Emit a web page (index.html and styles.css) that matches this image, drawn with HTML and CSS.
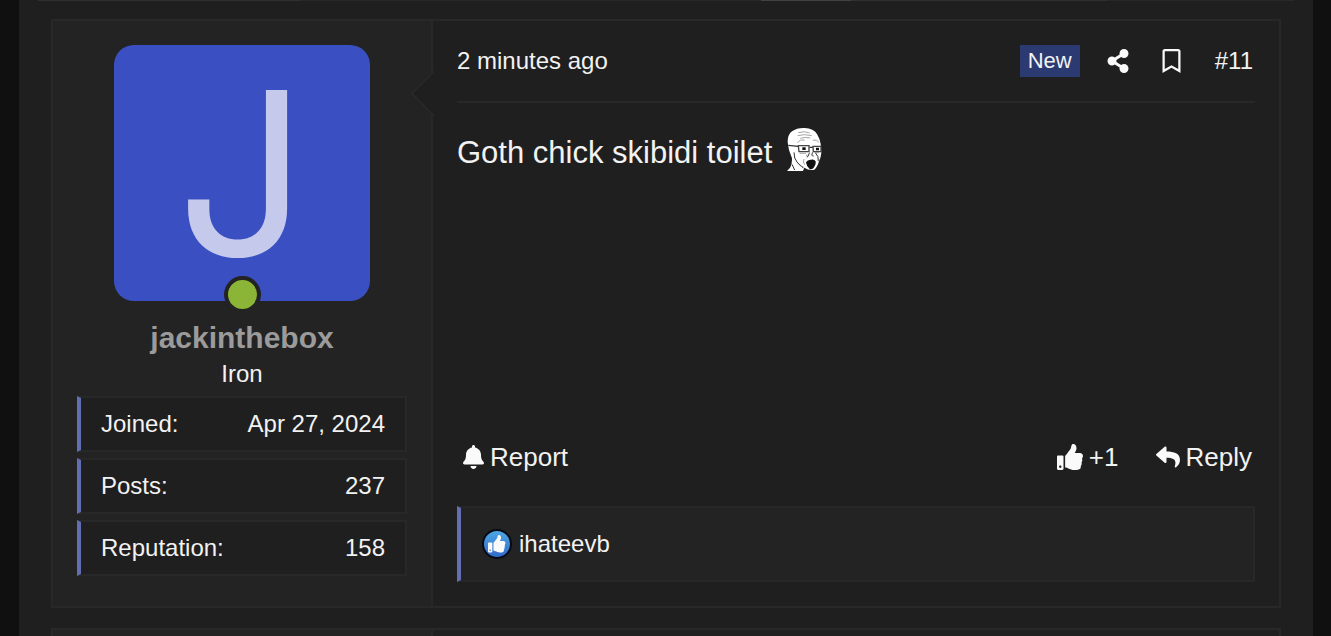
FILE: index.html
```html
<!DOCTYPE html>
<html lang="en">
<head>
    <meta charset="UTF-8">
    <meta name="viewport" content="width=device-width, initial-scale=1.0">
    <title>Thread</title>
    <link rel="stylesheet" href="styles.css">
</head>
<body>
    <main class="page">
        <div class="thread-top"><span class="seg-a"></span><span class="seg-b"></span><span class="seg-c"></span><span class="seg-d"></span><span class="seg-b"></span></div>

        <article class="post">
            <aside class="user">
                <a class="avatar" href="#user">J<span class="online"></span></a>
                <a class="username" href="#user">jackinthebox</a>
                <div class="rank">Iron</div>
                <dl class="stats">
                    <div class="stat"><dt>Joined:</dt><dd>Apr 27, 2024</dd></div>
                    <div class="stat"><dt>Posts:</dt><dd>237</dd></div>
                    <div class="stat"><dt>Reputation:</dt><dd>158</dd></div>
                </dl>
            </aside>

            <section class="content">
                <header class="post-header">
                    <a class="date" href="#post-11">2 minutes ago</a>
                    <span class="badge">New</span>
                    <a class="share" href="#share" aria-label="Share">
                        <svg width="22" height="24" viewBox="0 0 448 512"><path d="M352 320c-22.608 0-43.387 7.819-59.79 20.895l-102.486-64.054a96.551 96.551 0 0 0 0-41.683l102.486-64.054C308.613 184.181 329.392 192 352 192c53.019 0 96-42.981 96-96S405.019 0 352 0s-96 42.981-96 96c0 7.158.79 14.13 2.276 20.841L155.79 180.895C139.387 167.819 118.608 160 96 160c-53.019 0-96 42.981-96 96s42.981 96 96 96c22.608 0 43.387-7.819 59.79-20.895l102.486 64.054A96.301 96.301 0 0 0 256 416c0 53.019 42.981 96 96 96s96-42.981 96-96-42.981-96-96-96z"/></svg>
                    </a>
                    <a class="bookmark" href="#bookmark" aria-label="Bookmark">
                        <svg width="19" height="24" viewBox="0 0 384 512"><path d="M336 0H48C21.49 0 0 21.49 0 48v464l192-112 192 112V48c0-26.51-21.49-48-48-48zm0 428.43l-144-84-144 84V54a6 6 0 0 1 6-6h276c3.314 0 6 2.683 6 5.996V428.43z"/></svg>
                    </a>
                    <a href="#post-11">#11</a>
                </header>

                <div class="message">
                    <span>Goth chick skibidi toilet</span>
                    <svg class="smiley" width="37" height="45" viewBox="48 36 111 135" role="img" aria-label="soyjak">
                        <path fill="#fff" d="M51 168L60 158Q66 150 66 130Q55 107 53 82Q53 58 66 49Q81 38 104 39Q131 41 141 57Q149 70 152 86L154 113Q153 128 147 139Q142 157 133 164Q118 168 103 158L99 168Z"/>
                        <g fill="none" stroke="#333" stroke-width="2">
                            <path d="M85 53q20-6 34 1M83 62q20-6 42 0M91 70q16-5 30-1M82 83q8-11 22-8M128 76q14-3 19 7" stroke="#777"/>
                            <path d="M55 91l30 3M118 97h11" stroke-width="4"/>
                            <path d="M85 92h32v18H87zM129 94h24v16h-23z" stroke="#444" stroke-width="4"/>
                            <path d="M72 112q0 20 9 29t19 18M119 113l-7 14M128 112q-6 12 3 11M136 113q11 11 9 25M66 148l8 17" stroke-width="3"/>
                            <path d="M82 143q7 12 20 14M102 132q-5 9 2 17M111 119q-4 5 1 6M89 115h19M135 113h12" stroke="#777"/>
                        </g>
                        <path fill="#111" d="M108 142q5-9 15-8 9-3 14 5 2 10-5 18-5 8-13 5-10-9-11-20zM97 97h10v8h-10zM138 98h9v8h-9z"/>
                    </svg>
                </div>

                <footer class="actions">
                    <a class="report" href="#report">
                        <svg width="21" height="24" viewBox="0 0 448 512"><path d="M224 512c35.32 0 63.97-28.65 63.97-64H160.03c0 35.35 28.65 64 63.97 64zm215.39-149.71c-19.32-20.76-55.47-51.99-55.47-154.29 0-77.7-54.48-139.9-127.94-155.16V32c0-17.67-14.32-32-31.98-32s-31.98 14.33-31.98 32v20.84C118.56 68.1 64.08 130.3 64.08 208c0 102.3-36.15 133.53-55.47 154.29-6 6.45-8.66 14.16-8.61 21.71.11 16.4 12.98 32 32.1 32h383.8c19.12 0 32-15.6 32.1-32 .05-7.55-2.61-15.27-8.61-21.71z"/></svg>
                        Report
                    </a>
                    <button class="like" type="button">
                        <svg width="26" height="26" viewBox="0 0 512 512"><path id="thumb" d="M104 224H24c-13.255 0-24 10.745-24 24v240c0 13.255 10.745 24 24 24h80c13.255 0 24-10.745 24-24V248c0-13.255-10.745-24-24-24zM64 472c-13.255 0-24-10.745-24-24s10.745-24 24-24 24 10.745 24 24-10.745 24-24 24zM384 81.452c0 42.416-25.97 66.208-33.277 94.548h101.723c33.397 0 59.397 27.746 59.553 58.098.084 17.938-7.546 37.249-19.439 49.197l-.11.11c9.836 23.337 8.237 56.037-9.308 79.469 8.681 25.895-.069 57.704-16.382 74.757 4.298 17.598 2.244 32.575-6.148 44.632C440.202 511.587 389.616 512 346.839 512l-2.845-.001c-48.287-.017-87.806-17.598-119.56-31.725-15.957-7.099-36.821-15.887-52.651-16.178-6.54-.12-11.783-5.457-11.783-11.998v-213.77c0-3.2 1.282-6.271 3.558-8.521 39.614-39.144 56.648-80.587 89.117-113.111 14.804-14.832 20.188-37.236 25.393-58.902C282.515 39.293 291.817 0 312 0c24 0 72 8 72 81.452z"/></svg>
                        +1
                    </button>
                    <button class="reply" type="button">
                        <svg width="24" height="24" viewBox="0 0 512 512"><path d="M8.309 189.836L184.313 37.851C199.719 24.546 224 35.347 224 56.015v80.053c160.629 1.839 288 34.032 288 186.258 0 61.441-39.581 122.309-83.333 154.132-13.653 9.931-33.111-2.533-28.077-18.631 45.344-145.012-21.507-183.51-176.59-185.742V360c0 20.7-24.3 31.453-39.687 18.164l-176.004-152c-11.071-9.562-11.086-26.753 0-36.328z"/></svg>
                        Reply
                    </button>
                </footer>

                <div class="reactions">
                    <svg width="32" height="32" viewBox="0 0 32 32">
                        <defs>
                            <linearGradient id="blue" x1="0" y1="0" x2="0" y2="1">
                                <stop offset="0" stop-color="#4fa9e6"/>
                                <stop offset="1" stop-color="#2f68c8"/>
                            </linearGradient>
                        </defs>
                        <circle cx="16" cy="16" r="14" fill="url(#blue)" stroke="#050a14" stroke-width="2"/>
                        <use href="#thumb" transform="translate(7 7) scale(.034)"/>
                    </svg>
                    <a href="#reactions">ihateevb</a>
                </div>
            </section>
        </article>

        <article class="post next">
            <aside class="user"></aside>
        </article>
    </main>
</body>
</html>
```
FILE: styles.css
```css
* {
    box-sizing: border-box;
}

body {
    margin: 0;
    background: #101010;
    color: #f2f2f2;
    font-family: "Helvetica Neue", "Liberation Sans", Arial, sans-serif;
    font-size: 24px;
    line-height: 32px;
}

a {
    color: inherit;
    text-decoration: none;
}

button {
    padding: 0;
    border: 0;
    background: none;
    color: inherit;
    font: inherit;
    cursor: pointer;
}

svg {
    display: block;
    flex: none;
    fill: #fafafa;
}

.page {
    display: flex;
    flex-direction: column;
    min-height: 100vh;
    margin: 0 18px 0 19px;
    padding: 0 32px;
    background: #1f1f1f;
}

/* bottom edge of the bar above the posts */
.thread-top {
    display: grid;
    grid-template-columns: 262fr 460fr 90fr 255fr 188fr;
    height: 1px;
    margin: 0 -13px 18px;
}

.seg-a {
    background: #303030;
}

.seg-b {
    background: #282828;
}

.seg-c {
    background: #424242;
}

.seg-d {
    background: #303030;
}

.post {
    display: flex;
    margin-bottom: 20px;
    border: 2px solid #282828;
}

.user {
    width: 380px;
    flex: none;
    padding: 24px 24px 30px;
    border-right: 2px solid #282828;
    background: #232323;
    text-align: center;
}

.avatar {
    position: relative;
    display: block;
    width: 256px;
    height: 256px;
    margin: 0 auto 19px;
    border-radius: 20px;
    background: #3a50c2;
    color: #c5caec;
    font-family: Inter, sans-serif;
    font-size: 228px;
    line-height: 256px;
}

.online {
    position: absolute;
    left: 110px;
    bottom: -12px;
    width: 37px;
    height: 37px;
    border: 4px solid #232323;
    border-radius: 50%;
    background: #8bb536;
}

.username {
    display: block;
    color: #9b9b9b;
    font-size: 30px;
    font-weight: bold;
    line-height: 36px;
}

.rank {
    line-height: 36px;
}

.stats {
    display: grid;
    gap: 6px;
    margin: 4px 0 0;
}

.stat {
    display: flex;
    justify-content: space-between;
    padding: 10px 20px;
    border: 2px solid #282828;
    border-left: 4px solid #646eb2;
    background: #1f1f1f;
}

.stat dd {
    margin: 0;
}

.content {
    position: relative;
    display: flex;
    flex: 1;
    flex-direction: column;
    padding: 0 24px 24px;
}

/* arrow pointing at the avatar */
.content::before {
    content: "";
    position: absolute;
    top: 56px;
    left: -16px;
    width: 31px;
    height: 31px;
    border: solid #282828;
    border-width: 0 0 2px 2px;
    background: #1f1f1f;
    transform: rotate(45deg);
}

.post-header {
    position: relative;
    display: flex;
    align-items: center;
    padding: 24px 2px 24px 0;
    border-bottom: 2px solid #282828;
}

.date {
    margin-right: auto;
}

.badge {
    padding: 0 8px;
    background: #2c3a72;
    font-size: 22px;
}

.share {
    margin-left: 27px;
}

.bookmark {
    margin: 0 34px 0 33px;
}

.message {
    display: flex;
    flex: 1;
    align-items: flex-start;
    gap: 14px;
    padding-top: 24px;
    font-size: 31px;
    line-height: 52px;
}

.actions {
    display: flex;
    align-items: center;
    margin-bottom: 33px;
    padding: 0 3px 0 6px;
    font-size: 26px;
}

.report,
.like,
.reply {
    display: flex;
    align-items: center;
    gap: 6px;
}

.report {
    margin-right: auto;
}

.reply {
    margin-left: 37px;
}

.reactions {
    display: flex;
    align-items: center;
    gap: 6px;
    padding: 20px;
    border: 2px solid #282828;
    border-left: 4px solid #646eb2;
    background: #232323;
}

.next {
    flex: 1;
    margin-bottom: 0;
    border-bottom: 0;
}

.next .user {
    padding: 0;
}
```
